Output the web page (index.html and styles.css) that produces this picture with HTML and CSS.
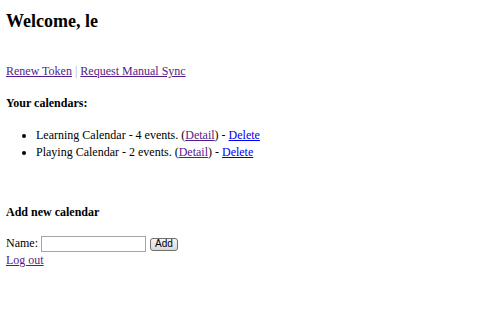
FILE: index.html
```html
<!DOCTYPE html>
<html>
<head>
<meta charset="utf-8">
<link rel="stylesheet" href="styles.css">
</head>
<body class="page">
<h2 class="welcome">Welcome, le</h2>
<p class="actions"><a href="#" class="visited">Renew Token</a> <span class="sep">|</span> <a href="#" class="visited">Request Manual Sync</a></p>
<h4 class="section">Your calendars:</h4>
<ul class="cal-list">
<li>Learning Calendar - 4 events. (<a href="#" class="visited">Detail</a>) - <a href="#" class="link">Delete</a></li>
<li>Playing Calendar - 2 events. (<a href="#" class="visited">Detail</a>) - <a href="#" class="link">Delete</a></li>
</ul>
<br>
<h4 class="section">Add new calendar</h4>
<form class="add-form">Name: <input type="text" class="name-input"> <button type="button" class="add-btn">Add</button></form>
<div class="logout"><a href="#" class="visited">Log out</a></div>
</body>
</html>
```
FILE: styles.css
```css
html { background: #fff; }
.page {
  margin: 11px 6px 6px;
  font-family: "Liberation Serif", "Times New Roman", serif;
  font-size: 12px;
  color: #000;
}
.welcome { font-size: 18px; font-weight: bold; margin: 0 0 15px; }
.actions { margin: 32px 0 17px; }
.sep { color: #b0b0b0; }
.section { font-size: 12px; font-weight: bold; margin: 15px 0; }
.cal-list { margin: 16px 0 14px; padding-left: 30px; }
.cal-list li { line-height: 17px; }
.visited { color: #551a8b; }
.link { color: #0000ee; }
.add-form { margin: 0; line-height: 17px; }
.logout { line-height: 17px; }
.name-input {
  box-sizing: border-box;
  width: 105px; height: 16px; padding: 1px 2px; border: 1px solid #a5a5a5;
  font-size: 12px; vertical-align: middle; margin: 0;
}
.add-btn {
  box-sizing: border-box;
  font-family: "Liberation Sans", Arial, sans-serif; font-size: 10px; line-height: 10px;
  width: 28px; height: 13px; padding: 0; border: 1px solid #707070; border-radius: 3px;
  background: linear-gradient(#f4f4f4, #dadada); color: #000;
  vertical-align: middle; margin: 0 0 0 1px;
}
```
